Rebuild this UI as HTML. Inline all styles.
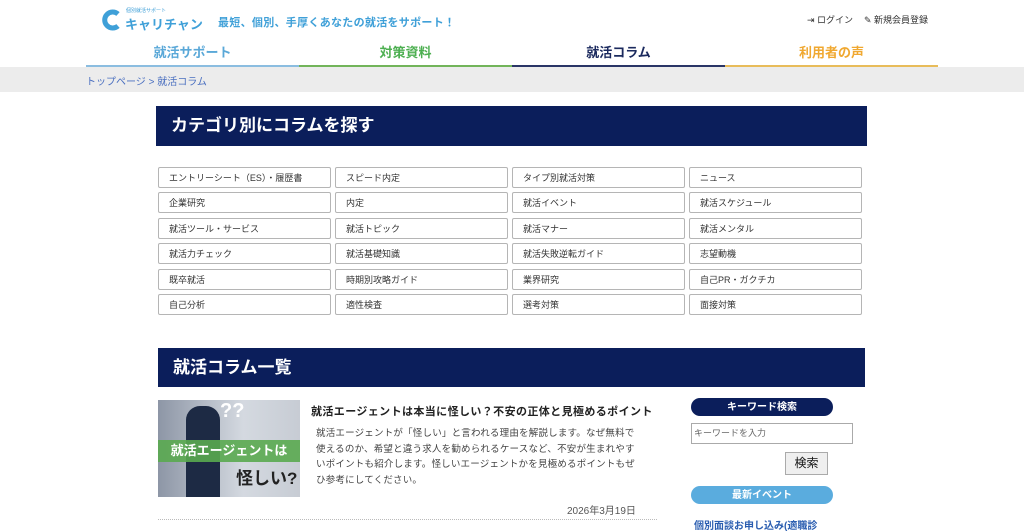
<!DOCTYPE html>
<html><head><meta charset="utf-8"><style>
*{margin:0;padding:0;box-sizing:border-box}
body{width:1024px;height:532px;overflow:hidden;background:#fff;font-family:"Liberation Sans","Noto Sans CJK JP",sans-serif;position:relative;color:#333}
.a{position:absolute;white-space:nowrap}
.tab{position:absolute;top:40px;height:27px;width:213px;text-align:center;font-size:13px;font-weight:bold;line-height:25px;border-bottom:2px solid}
.cell{position:absolute;width:173px;height:21px;border:1px solid #b5b5b5;border-radius:2px;font-size:9px;line-height:20px;padding-left:10px;color:#333}
.hd{position:absolute;background:#0b1e5b;color:#fff;font-weight:bold}
</style></head><body>
<svg class="a" style="left:102px;top:9px" width="20" height="22" viewBox="0 0 20 22"><path d="M16 5 A8 8 0 1 0 16 17" fill="none" stroke="#3fa0d8" stroke-width="5"/></svg>
<div class="a" style="left:126px;top:7px;font-size:5px;color:#3fa0d8">個別就活サポート</div>
<div class="a" style="left:125px;top:14px;font-size:13px;font-weight:bold;color:#3fa0d8">キャリチャン</div>
<div class="a" style="left:218px;top:14px;font-size:11px;font-weight:bold;color:#3fa0d8;letter-spacing:.3px">最短、個別、手厚くあなたの就活をサポート！</div>
<div class="a" style="left:807px;top:13px;font-size:9px;color:#333">⇥ ログイン</div>
<div class="a" style="left:864px;top:13px;font-size:9px;color:#333">✎ 新規会員登録</div>
<div class="tab" style="left:86px;color:#5aa8d8;border-color:#8bbde0">就活サポート</div>
<div class="tab" style="left:299px;color:#4caf50;border-color:#72b45a">対策資料</div>
<div class="tab" style="left:512px;color:#1b2a5e;border-color:#2a3566">就活コラム</div>
<div class="tab" style="left:725px;color:#f0a830;border-color:#e8bc5a">利用者の声</div>
<div class="a" style="left:0;top:67px;width:1024px;height:25px;background:#ececec"></div>
<div class="a" style="left:86px;top:73px;font-size:10px;color:#4a6fc0">トップページ &gt; 就活コラム</div>
<div class="hd" style="left:156px;top:106px;width:711px;height:40px;font-size:17px;line-height:40px;padding-left:15px">カテゴリ別にコラムを探す</div>
<div class="cell" style="left:158px;top:167px">エントリーシート（ES）・履歴書</div>
<div class="cell" style="left:335px;top:167px">スピード内定</div>
<div class="cell" style="left:512px;top:167px">タイプ別就活対策</div>
<div class="cell" style="left:689px;top:167px">ニュース</div>
<div class="cell" style="left:158px;top:192px">企業研究</div>
<div class="cell" style="left:335px;top:192px">内定</div>
<div class="cell" style="left:512px;top:192px">就活イベント</div>
<div class="cell" style="left:689px;top:192px">就活スケジュール</div>
<div class="cell" style="left:158px;top:218px">就活ツール・サービス</div>
<div class="cell" style="left:335px;top:218px">就活トピック</div>
<div class="cell" style="left:512px;top:218px">就活マナー</div>
<div class="cell" style="left:689px;top:218px">就活メンタル</div>
<div class="cell" style="left:158px;top:243px">就活力チェック</div>
<div class="cell" style="left:335px;top:243px">就活基礎知識</div>
<div class="cell" style="left:512px;top:243px">就活失敗逆転ガイド</div>
<div class="cell" style="left:689px;top:243px">志望動機</div>
<div class="cell" style="left:158px;top:269px">既卒就活</div>
<div class="cell" style="left:335px;top:269px">時期別攻略ガイド</div>
<div class="cell" style="left:512px;top:269px">業界研究</div>
<div class="cell" style="left:689px;top:269px">自己PR・ガクチカ</div>
<div class="cell" style="left:158px;top:294px">自己分析</div>
<div class="cell" style="left:335px;top:294px">適性検査</div>
<div class="cell" style="left:512px;top:294px">選考対策</div>
<div class="cell" style="left:689px;top:294px">面接対策</div>
<div class="hd" style="left:158px;top:348px;width:707px;height:39px;font-size:17px;line-height:39px;padding-left:15px">就活コラム一覧</div>
<div class="a" style="left:158px;top:400px;width:142px;height:97px;background:linear-gradient(90deg,#8d96a6,#d4d9e0 60%,#c7ccd4);overflow:hidden">
<div class="a" style="left:28px;top:6px;width:34px;height:91px;background:#1d2a44;border-radius:14px 14px 0 0"></div>
<div class="a" style="left:62px;top:0;font-size:20px;color:#fff;font-weight:bold">??</div>
<div class="a" style="left:0;top:40px;width:142px;height:22px;background:rgba(90,170,80,.9);color:#fff;font-size:13px;font-weight:bold;line-height:22px;text-align:center">就活エージェントは</div>
<div class="a" style="left:78px;top:64px;font-size:17px;color:#222;font-weight:bold">怪しい?</div>
</div>
<div class="a" style="left:311px;top:403px;font-size:11px;font-weight:bold;color:#222;letter-spacing:.4px">就活エージェントは本当に怪しい？不安の正体と見極めるポイント</div>
<div class="a" style="left:316px;top:426px;font-size:9.5px;letter-spacing:.2px;line-height:15.5px;color:#444">就活エージェントが「怪しい」と言われる理由を解説します。なぜ無料で<br>使えるのか、希望と違う求人を勧められるケースなど、不安が生まれやす<br>いポイントも紹介します。怪しいエージェントかを見極めるポイントもぜ<br>ひ参考にしてください。</div>
<div class="a" style="left:567px;top:502px;font-size:10px;color:#555">2026年3月19日</div>
<div class="a" style="left:158px;top:519px;width:499px;border-top:1px dotted #bbb"></div>
<div class="a" style="left:691px;top:398px;width:142px;height:18px;background:#0b1e5b;border-radius:9px;color:#fff;font-size:10px;font-weight:bold;text-align:center;line-height:19px">キーワード検索</div>
<div class="a" style="left:691px;top:423px;width:162px;height:21px;border:1px solid #aaa;font-size:9px;color:#666;line-height:19px;padding-left:2px">キーワードを入力</div>
<div class="a" style="left:785px;top:452px;width:43px;height:23px;border:1px solid #aaa;background:#efefef;font-size:12px;text-align:center;line-height:21px;color:#111">検索</div>
<div class="a" style="left:691px;top:486px;width:142px;height:18px;background:#5aacde;border-radius:9px;color:#fff;font-size:10px;font-weight:bold;text-align:center;line-height:19px">最新イベント</div>
<div class="a" style="left:694px;top:517px;font-size:10px;color:#2a5db0;font-weight:bold">個別面談お申し込み(適職診</div>
</body></html>
